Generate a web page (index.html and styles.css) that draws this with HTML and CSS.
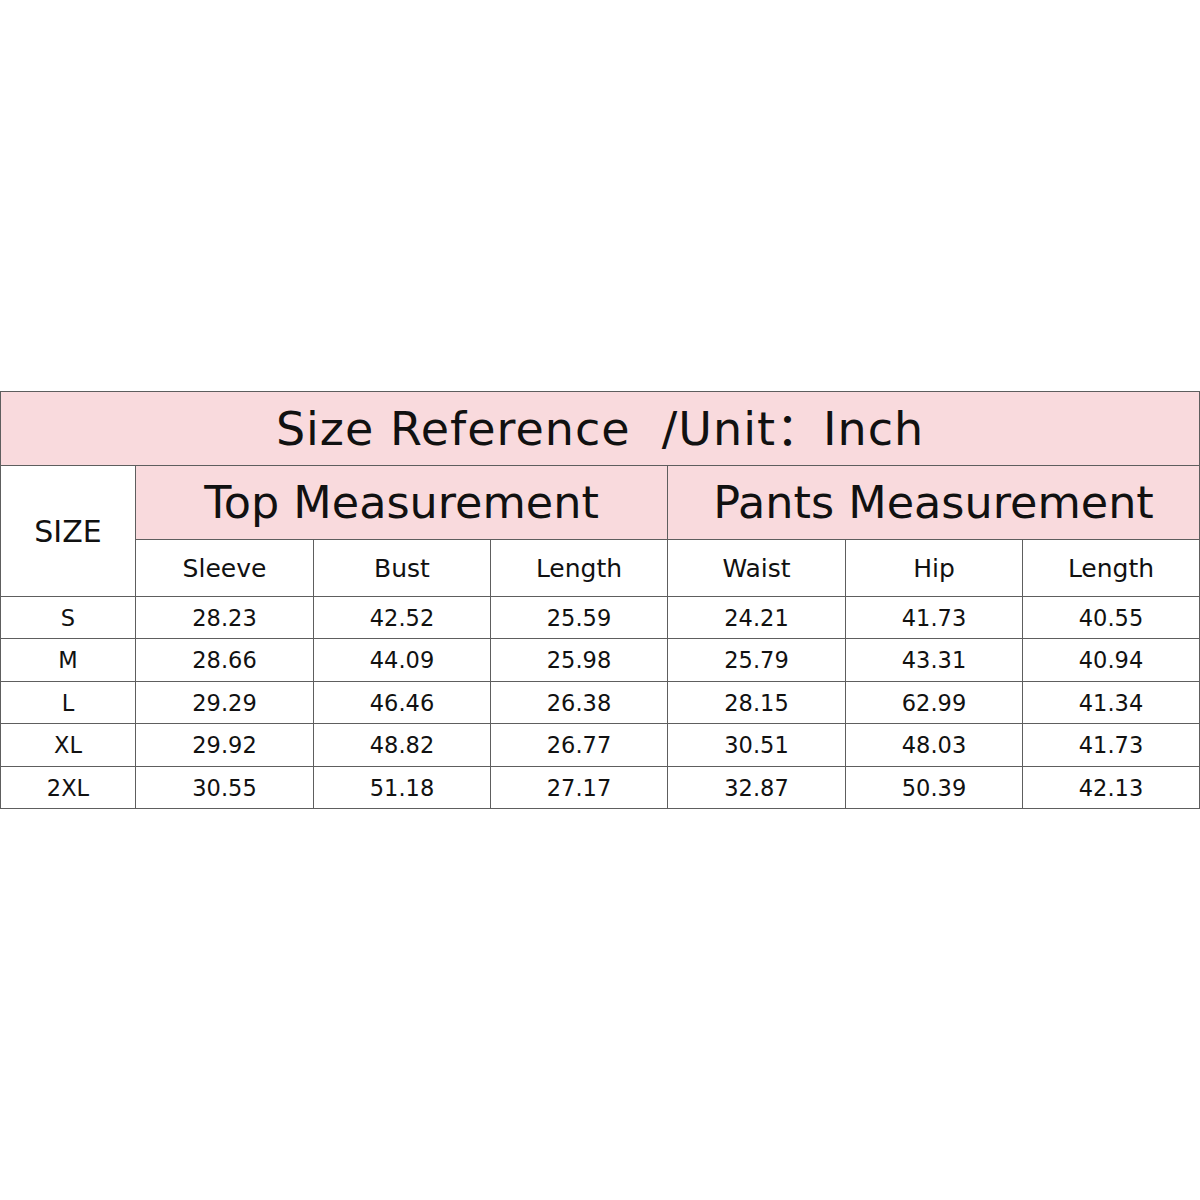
FILE: index.html
```html
<!DOCTYPE html>
<html lang="en">
<head>
<meta charset="utf-8">
<title>Size Reference</title>
<link rel="stylesheet" href="styles.css">
</head>
<body>
<main class="page">
  <table class="chart">
    <colgroup>
      <col class="c-size">
      <col class="c-a"><col class="c-b"><col class="c-b">
      <col class="c-a"><col class="c-b"><col class="c-b">
    </colgroup>
    <tr class="r-title">
      <th colspan="7" class="pink title">Size Reference&nbsp; /Unit：Inch</th>
    </tr>
    <tr class="r-group">
      <th rowspan="2" class="size-head">SIZE</th>
      <th colspan="3" class="pink group">Top Measurement</th>
      <th colspan="3" class="pink group">Pants Measurement</th>
    </tr>
    <tr class="r-cols">
      <th class="colname">Sleeve</th>
      <th class="colname">Bust</th>
      <th class="colname">Length</th>
      <th class="colname">Waist</th>
      <th class="colname">Hip</th>
      <th class="colname">Length</th>
    </tr>
    <tr class="r-data r-a"><td>S</td><td>28.23</td><td>42.52</td><td>25.59</td><td>24.21</td><td>41.73</td><td>40.55</td></tr>
    <tr class="r-data r-b"><td>M</td><td>28.66</td><td>44.09</td><td>25.98</td><td>25.79</td><td>43.31</td><td>40.94</td></tr>
    <tr class="r-data r-a"><td>L</td><td>29.29</td><td>46.46</td><td>26.38</td><td>28.15</td><td>62.99</td><td>41.34</td></tr>
    <tr class="r-data r-b"><td>XL</td><td>29.92</td><td>48.82</td><td>26.77</td><td>30.51</td><td>48.03</td><td>41.73</td></tr>
    <tr class="r-data r-a"><td>2XL</td><td>30.55</td><td>51.18</td><td>27.17</td><td>32.87</td><td>50.39</td><td>42.13</td></tr>
  </table>
</main>
</body>
</html>
```
FILE: styles.css
```css
html, body {
  margin: 0;
  padding: 0;
  background: #ffffff;
}
.page {
  min-height: 1200px;
  display: flex;
  align-items: center;
  justify-content: flex-start;
}
.chart {
  width: 1199px;
  table-layout: fixed;
  border-collapse: collapse;
  font-family: "DejaVu Sans", "Noto Sans CJK SC", sans-serif;
  color: #111;
  background: #fff;
}
.c-size { width: 135px; }
.c-a { width: 178px; }
.c-b { width: 177px; }
.chart th, .chart td {
  border: 1px solid #5e5e5e;
  padding: 0;
  text-align: center;
  vertical-align: middle;
  font-weight: normal;
}
.pink { background: #f9dadd; }
.r-title { height: 74px; }
.r-group { height: 74px; }
.r-cols { height: 57px; }
.r-a { height: 42px; }
.r-b { height: 43px; }
.title {
  font-size: 46px;
  line-height: 54px;
  letter-spacing: 1px;
  padding-bottom: 18px;
}
.group {
  font-size: 44.5px;
  padding-bottom: 3px;
}
.size-head {
  font-size: 30px;
}
.colname {
  font-size: 25px;
}
.r-data td {
  font-size: 22.5px;
}
```
